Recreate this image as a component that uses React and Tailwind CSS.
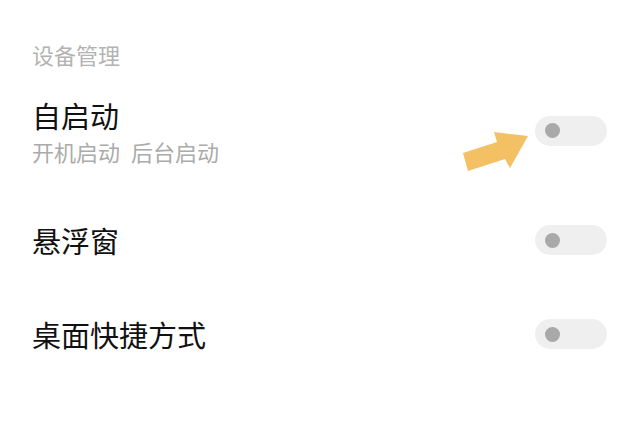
import React from 'react';

function Toggle() {
  return (
    <div className="w-[72px] h-[30px] rounded-full bg-[#efefef] flex items-center pl-[10px]">
      <div className="w-[15px] h-[15px] rounded-full bg-[#a9a9a9]" />
    </div>
  );
}

export default function App() {
  const font = { fontFamily: '"Noto Sans CJK SC", "Noto Sans", sans-serif' };
  return (
    <div className="relative w-full h-[426px] bg-white overflow-hidden" style={font}>
      <div className="pt-[40px] pl-[32px] pr-[33px]">
        {/* Section header */}
        <div className="text-[22px] leading-[28px] text-[#b3b3b3]">设备管理</div>

        {/* 自启动 */}
        <div className="mt-[29px] flex items-center justify-between">
          <div>
            <div className="text-[29px] leading-[36px] text-[#111]">自启动</div>
            <div className="mt-[5px] text-[22px] leading-[26px] text-[#ababab] flex gap-[11px]">
              <span>开机启动</span>
              <span>后台启动</span>
            </div>
          </div>
          <Toggle />
        </div>

        {/* 悬浮窗 */}
        <div className="mt-[58px] flex items-center justify-between">
          <div className="text-[29px] leading-[36px] text-[#111]">悬浮窗</div>
          <Toggle />
        </div>

        {/* 桌面快捷方式 */}
        <div className="mt-[58px] flex items-center justify-between">
          <div className="text-[29px] leading-[36px] text-[#111]">桌面快捷方式</div>
          <Toggle />
        </div>
      </div>

      {/* Pointer arrow */}
      <svg className="absolute left-0 top-0" width="640" height="426" viewBox="0 0 640 426">
        <polygon
          points="463,153 497,142 494,132 528,136 510,168 505,159 468,171"
          fill="#f4c064"
        />
      </svg>
    </div>
  );
}
